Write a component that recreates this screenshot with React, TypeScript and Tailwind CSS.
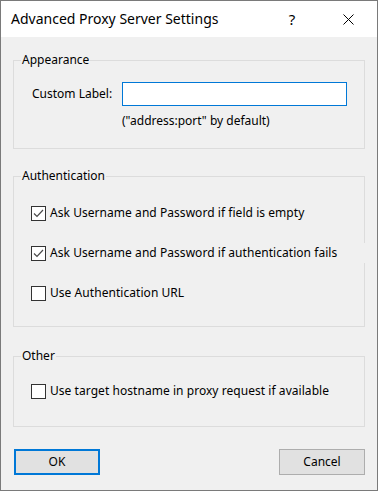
import type { ReactNode } from "react";

const font = { fontFamily: '"Noto Sans", "Open Sans", sans-serif' };

function Group({ label, className, children }: { label: string; className: string; children: ReactNode }) {
  return (
    <div className={`relative border border-[#dcdcdc] ${className}`}>
      <span className="absolute left-[7px] top-[-10px] bg-[#f0f0f0] px-[1px] text-[12px] leading-[18px]">{label}</span>
      {children}
    </div>
  );
}

function Check({ checked, label, wide }: { checked?: boolean; label: string; wide?: boolean }) {
  return (
    <div className={`relative flex h-[20px] items-center bg-[#f0f0f0] ${wide ? "mr-[-3px]" : ""}`}>
      <span className="flex h-[15px] w-[15px] items-center justify-center border border-[#333333] bg-white">
        {checked && (
          <svg width="13" height="13" viewBox="0 0 13 13">
            <polyline points="2,6.5 5,9.5 11,3" fill="none" stroke="#4a4a4a" strokeWidth="1.2" />
          </svg>
        )}
      </span>
      <span className="ml-[4px] text-[12px] leading-[16px] tracking-[0.05px]">{label}</span>
    </div>
  );
}

export default function App() {
  return (
    <div className="flex h-[491px] w-[378px] flex-col border border-[#7a7a7a] text-black" style={font}>
      <div className="flex h-[36px] items-center bg-white">
        <span className="pl-[10px] text-[14px] leading-[20px]">Advanced Proxy Server Settings</span>
        <span className="ml-auto flex w-[46px] justify-center text-[15px]">?</span>
        <span className="ml-[10px] mr-[6px] flex w-[46px] items-center justify-center">
          <svg width="11" height="11" viewBox="0 0 11 11">
            <path d="M0.5 0.5 L10.5 10.5 M10.5 0.5 L0.5 10.5" stroke="#000" strokeWidth="1" />
          </svg>
        </span>
      </div>
      <div className="flex flex-1 flex-col bg-[#f0f0f0] pl-[12px] pr-[12px]">
        <Group label="Appearance" className="mt-[23px] h-[89px] pl-[18px] pt-[21px]">
          <div className="flex items-center">
            <span className="w-[90px] text-[12px]">Custom Label:</span>
            <input className="h-[24px] w-[225px] border border-[#0078d7] bg-white px-1 text-[12px] outline-none" />
          </div>
          <div className="mt-[7px] pl-[90px] text-[12px] leading-[16px]">("address:port" by default)</div>
        </Group>
        <Group label="Authentication" className="mt-[27px] flex h-[151px] flex-col gap-[20px] pl-[17px] pt-[26px]">
          <Check checked label="Ask Username and Password if field is empty" />
          <Check checked wide label="Ask Username and Password if authentication fails" />
          <Check label="Use Authentication URL" />
        </Group>
        <Group label="Other" className="mt-[29px] h-[71px] pl-[17px] pt-[24px]">
          <Check label="Use target hostname in proxy request if available" />
        </Group>
        <div className="mt-[22px] flex justify-between">
          <button className="ml-[1px] h-[26px] w-[86px] border-2 border-[#0078d7] bg-[#e1e1e1] text-[12px]">OK</button>
          <button className="h-[26px] w-[86px] border border-[#adadad] bg-[#e1e1e1] text-[12px]">Cancel</button>
        </div>
      </div>
    </div>
  );
}
